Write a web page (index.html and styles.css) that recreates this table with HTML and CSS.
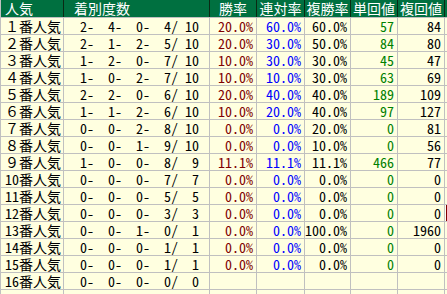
FILE: index.html
```html
<!DOCTYPE html>
<html lang="ja">
<head>
<meta charset="utf-8">
<title>人気別成績</title>
<link rel="stylesheet" href="styles.css">
</head>
<body>
<table class="grid">
  <colgroup>
    <col class="c-name"><col class="c-rec"><col class="c-win"><col class="c-ren"><col class="c-fuku"><col class="c-tan"><col class="c-fk"><col class="c-pad">
  </colgroup>
  <thead>
    <tr>
      <th class="h-left">人気</th>
      <th class="h-rec">着別度数</th>
      <th>勝率</th>
      <th>連対率</th>
      <th>複勝率</th>
      <th>単回値</th>
      <th>複回値</th>
      <th class="h-pad"></th>
    </tr>
  </thead>
  <tbody>
    <tr><td class="name">１番人気</td><td class="rec">2-  4-  0-  4/ 10</td><td class="win">20.0%</td><td class="ren">60.0%</td><td class="num">60.0%</td><td class="tan">57</td><td class="num">84</td><td class="pad"></td></tr>
    <tr><td class="name">２番人気</td><td class="rec">2-  1-  2-  5/ 10</td><td class="win">20.0%</td><td class="ren">30.0%</td><td class="num">50.0%</td><td class="tan">84</td><td class="num">80</td><td class="pad"></td></tr>
    <tr><td class="name">３番人気</td><td class="rec">1-  2-  0-  7/ 10</td><td class="win">10.0%</td><td class="ren">30.0%</td><td class="num">30.0%</td><td class="tan">45</td><td class="num">47</td><td class="pad"></td></tr>
    <tr><td class="name">４番人気</td><td class="rec">1-  0-  2-  7/ 10</td><td class="win">10.0%</td><td class="ren">10.0%</td><td class="num">30.0%</td><td class="tan">63</td><td class="num">69</td><td class="pad"></td></tr>
    <tr><td class="name">５番人気</td><td class="rec">2-  2-  0-  6/ 10</td><td class="win">20.0%</td><td class="ren">40.0%</td><td class="num">40.0%</td><td class="tan">189</td><td class="num">109</td><td class="pad"></td></tr>
    <tr><td class="name">６番人気</td><td class="rec">1-  1-  2-  6/ 10</td><td class="win">10.0%</td><td class="ren">20.0%</td><td class="num">40.0%</td><td class="tan">97</td><td class="num">127</td><td class="pad"></td></tr>
    <tr><td class="name">７番人気</td><td class="rec">0-  0-  2-  8/ 10</td><td class="win">0.0%</td><td class="ren">0.0%</td><td class="num">20.0%</td><td class="tan">0</td><td class="num">81</td><td class="pad"></td></tr>
    <tr><td class="name">８番人気</td><td class="rec">0-  0-  1-  9/ 10</td><td class="win">0.0%</td><td class="ren">0.0%</td><td class="num">10.0%</td><td class="tan">0</td><td class="num">56</td><td class="pad"></td></tr>
    <tr><td class="name">９番人気</td><td class="rec">1-  0-  0-  8/  9</td><td class="win">11.1%</td><td class="ren">11.1%</td><td class="num">11.1%</td><td class="tan">466</td><td class="num">77</td><td class="pad"></td></tr>
    <tr><td class="name">10番人気</td><td class="rec">0-  0-  0-  7/  7</td><td class="win">0.0%</td><td class="ren">0.0%</td><td class="num">0.0%</td><td class="tan">0</td><td class="num">0</td><td class="pad"></td></tr>
    <tr><td class="name">11番人気</td><td class="rec">0-  0-  0-  5/  5</td><td class="win">0.0%</td><td class="ren">0.0%</td><td class="num">0.0%</td><td class="tan">0</td><td class="num">0</td><td class="pad"></td></tr>
    <tr><td class="name">12番人気</td><td class="rec">0-  0-  0-  3/  3</td><td class="win">0.0%</td><td class="ren">0.0%</td><td class="num">0.0%</td><td class="tan">0</td><td class="num">0</td><td class="pad sel"></td></tr>
    <tr><td class="name">13番人気</td><td class="rec">0-  0-  1-  0/  1</td><td class="win">0.0%</td><td class="ren">0.0%</td><td class="num">100.0%</td><td class="tan">0</td><td class="num">1960</td><td class="pad"></td></tr>
    <tr><td class="name">14番人気</td><td class="rec">0-  0-  0-  1/  1</td><td class="win">0.0%</td><td class="ren">0.0%</td><td class="num">0.0%</td><td class="tan">0</td><td class="num">0</td><td class="pad"></td></tr>
    <tr><td class="name">15番人気</td><td class="rec">0-  0-  0-  1/  1</td><td class="win">0.0%</td><td class="ren">0.0%</td><td class="num">0.0%</td><td class="tan">0</td><td class="num">0</td><td class="pad"></td></tr>
    <tr><td class="name">16番人気</td><td class="rec">0-  0-  0-  0/  0</td><td class="win"></td><td class="ren"></td><td class="num"></td><td class="tan"></td><td class="num"></td><td class="pad"></td></tr>
    <tr><td class="name"></td><td class="rec"></td><td class="win"></td><td class="ren"></td><td class="num"></td><td class="tan"></td><td class="num"></td><td class="pad"></td></tr>
  </tbody>
</table>
</body>
</html>
```

FILE: styles.css
```css
html, body {
  margin: 0;
  padding: 0;
  background: #ffffe0;
  overflow: hidden;
}

.grid {
  border-collapse: collapse;
  table-layout: fixed;
  width: 467px;
  font-family: "Noto Sans Mono CJK JP", "Noto Sans CJK JP", monospace;
  font-size: 14px;
  color: #000;
}

.c-name { width: 63px; }
.c-rec  { width: 146px; }
.c-win  { width: 47px; }
.c-ren  { width: 48px; }
.c-fuku { width: 46px; }
.c-tan  { width: 47px; }
.c-fk   { width: 47px; }
.c-pad  { width: 23px; }

.grid th {
  background: #007040;
  color: #fff;
  font-weight: normal;
  height: 17px;
  line-height: 17px;
  padding: 0;
  text-align: center;
  white-space: nowrap;
  border-right: 1px solid #0a2a14;
  border-left: 1px solid #0a2a14;
  border-top: 0;
  border-bottom: 1px solid #c0c0c0;
}

.grid th.h-left {
  text-align: left;
  padding-left: 4px;
  border-left: 1px solid #c0c0c0;
}

.grid th.h-rec {
  text-align: left;
  padding-left: 10px;
}

.grid td {
  background: #ffffe0;
  height: 16px;
  line-height: 16px;
  padding: 0 3px 0 0;
  border: 1px solid #c0c0c0;
  text-align: right;
  white-space: pre;
  overflow: hidden;
  font-feature-settings: "hwid" 1;
}

.grid td.name {
  text-align: left;
  padding: 0 0 0 4px;
  font-feature-settings: normal;
}

.grid td.rec { padding-right: 10px; }
.grid td.win { color: #800000; }
.grid td.ren { color: #0000ff; }
.grid td.tan { color: #008000; }

.grid td.pad { padding: 0; }
.grid td.sel { box-shadow: inset 1px 0 0 #fffff0, inset 2px 1px 0 #800000; }
```
